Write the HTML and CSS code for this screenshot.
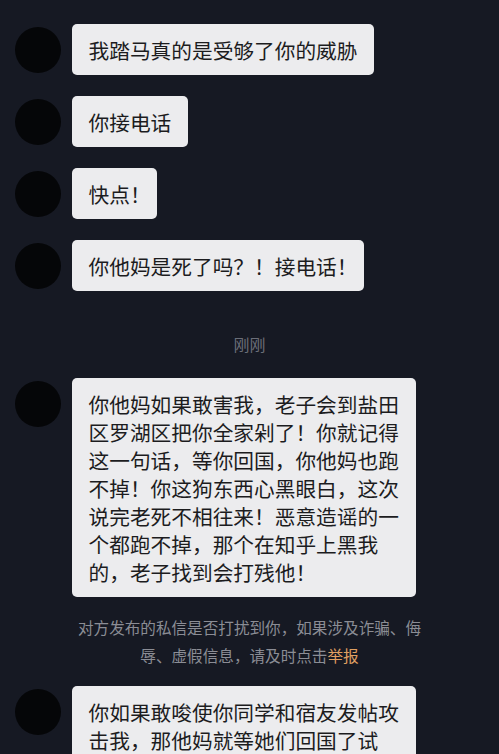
FILE: index.html
```html
<!DOCTYPE html>
<html lang="zh-CN">
<head>
<meta charset="utf-8">
<title>私信</title>
<link rel="stylesheet" href="styles.css">
</head>
<body>
<div class="chat">
  <div class="msg"><div class="avatar"></div><div class="bubble">我踏马真的是受够了你的威胁</div></div>
  <div class="msg"><div class="avatar"></div><div class="bubble">你接电话</div></div>
  <div class="msg"><div class="avatar"></div><div class="bubble">快点<span class="bang">！</span></div></div>
  <div class="msg"><div class="avatar"></div><div class="bubble">你他妈是死了吗？！接电话<span class="bang">！</span></div></div>
  <div class="time">刚刚</div>
  <div class="msg"><div class="avatar"></div><div class="bubble">你他妈如果敢害我，老子会到盐田区罗湖区把你全家剁了！你就记得这一句话，等你回国，你他妈也跑不掉！你这狗东西心黑眼白，这次说完老死不相往来！恶意造谣的一个都跑不掉，那个在知乎上黑我的，老子找到会打残他<span class="bang">！</span></div></div>
  <div class="notice">对方发布的私信是否打扰到你，如果涉及诈骗、侮辱、虚假信息，请及时点击<span class="report">举报</span></div>
  <div class="msg"><div class="avatar"></div><div class="bubble">你如果敢唆使你同学和宿友发帖攻击我，那他妈就等她们回国了试</div></div>
</div>
</body>
</html>
```
FILE: styles.css
```css
html, body {
  margin: 0;
  padding: 0;
  background: #161923;
  height: 100%;
  overflow: hidden;
}
body {
  font-family: "Noto Sans CJK SC", "Noto Sans", sans-serif;
}
.chat {
  display: flex;
  flex-direction: column;
  padding-top: 24px;
}
.msg {
  display: flex;
  align-items: flex-start;
  gap: 11px;
  padding-left: 15px;
  margin-bottom: 21px;
}
.avatar {
  flex: none;
  width: 46px;
  height: 46px;
  border-radius: 50%;
  background: #050608;
  margin-top: 3px;
}
.bubble {
  max-width: 344px;
  box-sizing: border-box;
  background: #ececee;
  color: #1c1c1e;
  border-radius: 5px;
  padding: 11.5px 16.5px;
  font-size: 20.7px;
  line-height: 28px;
}
.bang {
  font-feature-settings: "halt" 1;
}
.time {
  text-align: center;
  color: #6b6e78;
  font-size: 16px;
  line-height: 23px;
  padding-top: 21px;
  margin-bottom: 22px;
}
.notice {
  text-align: center;
  color: #8b8d95;
  font-size: 15.6px;
  line-height: 28px;
  padding: 0 72px;
  margin: -5px 0 17px;
}
.report {
  color: #e0a062;
}
```
